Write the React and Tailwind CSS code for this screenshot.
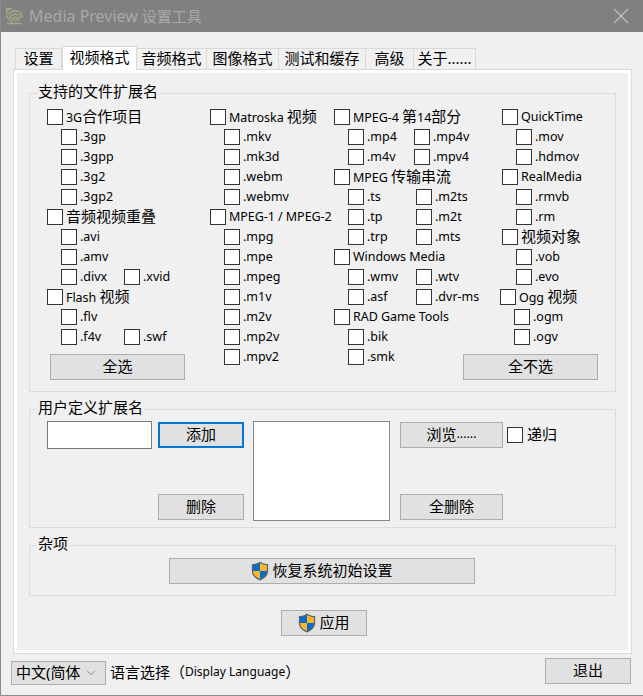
import React from 'react';
import { ChevronDown, X } from 'lucide-react';

const Check = () => <span className="w-4 h-4 shrink-0 bg-white border border-[#333]" />;

// top level item of a column, label sits 3px after the box
const Head = ({ label, latin, className = '' }) => (
  <div className={`h-5 flex items-center gap-[3px] ${className}`}>
    <Check />
    <span className={`whitespace-nowrap ${latin ? 'pt-px' : 'pb-[2px]'}`}>{label}</span>
  </div>
);

const Ext = ({ label, width }) => (
  <div className="h-5 flex items-center gap-[3px] shrink-0" style={width ? { width } : undefined}>
    <Check />
    <span className="whitespace-nowrap text-[12.5px]">{label}</span>
  </div>
);

const Sub = ({ a, b, width, className = 'ml-[14px]' }) => (
  <div className={`flex ${className}`}>
    <Ext label={a} width={b ? width : undefined} />
    {b && <Ext label={b} />}
  </div>
);

const Cjk = ({ children }) => <span className="text-[15px]">{children}</span>;
const Lat = ({ children }) => <span className="text-[12.5px] tracking-[-0.05px]">{children}</span>;

const Btn = ({ children, focused, className = '' }) => (
  <button className={`h-[26px] pb-[2px] flex items-center justify-center bg-[#e1e1e1] text-[15px] text-black ${focused ? 'border-2 border-[#0078d7]' : 'border border-[#adadad]'} ${className}`}>
    {children}
  </button>
);

const Group = ({ title, className = '', children }) => (
  <div className={`relative border border-[#dcdcdc] ${className}`}>
    <span className="absolute left-[7px] top-[-12px] px-[1px] bg-[#f0f0f0] text-[15px] leading-[18px]">{title}</span>
    {children}
  </div>
);

const Shield = () => (
  <svg width="18" height="20" viewBox="0 0 17 20" preserveAspectRatio="none" className="shrink-0 mt-[2px]">
    <path d="M8.5 0.5 C6 2.5 3.5 3 0.8 3 V10 C0.8 14.5 4 17.5 8.5 19.5 C13 17.5 16.2 14.5 16.2 10 V3 C13.5 3 11 2.5 8.5 0.5 Z" fill="#5f6670" />
    <path d="M8.5 2 C6.4 3.5 4.2 4.1 2 4.2 V10 H8.5 Z" fill="#0b6cc5" />
    <path d="M8.5 2 C10.6 3.5 12.8 4.1 15 4.2 V10 H8.5 Z" fill="#fbb82b" />
    <path d="M2 10 C2 13.8 4.8 16.3 8.5 18 V10 Z" fill="#fbb82b" />
    <path d="M15 10 C15 13.8 12.2 16.3 8.5 18 V10 Z" fill="#0b6cc5" />
  </svg>
);

const Logo = () => (
  <svg width="18" height="18" viewBox="0 0 18 18" className="shrink-0" fill="none" stroke="#a5a583" strokeWidth="1.6">
    <path d="M1 1 H8 C4.5 2.5 2.5 4.5 1 8 Z" fill="#a5a583" stroke="none" />
    <path d="M1.5 11 C3 5.5 8 3 12 4 C15 4.8 17 7.5 17 10.5" />
    <path d="M4 14 C4 9.5 8 6.5 11.5 7.2 C14 7.8 15 10 15 12" />
    <path d="M6.5 16 C6 12.5 9 9.8 11.5 10.5 C13 11 13.5 12.5 13.2 14" />
    <path d="M2 16.5 H16" />
    <path d="M9.5 14 C10 13 11 13 11.5 14" />
  </svg>
);

const tabs = [
  ['设置', 'w-[47px]'],
  ['视频格式', 'w-[75px]', true],
  ['音频格式', 'w-[71px]'],
  ['图像格式', 'w-[73px]'],
  ['测试和缓存', 'w-[88px]'],
  ['高级', 'w-[49px]'],
  ['关于......', 'w-[63px]'],
];

export default function App() {
  return (
    <div className="w-[643px] h-[696px] overflow-hidden bg-[#f0f0f0] text-black border-l border-b border-[#8c8c8c] font-['Noto_Sans','Noto_Sans_CJK_SC',sans-serif]">
      {/* title bar */}
      <div className="h-[32px] bg-[#808080] flex items-center pl-[4px] pr-[9px]">
        <Logo />
        <span className="ml-[6px] text-[#a8a8a8] text-[15px] whitespace-nowrap"><span className="text-[16px]">Media Preview</span> 设置工具</span>
        <X size={26} strokeWidth={1} className="ml-auto text-[#c4c4c4]" />
      </div>

      {/* tabs */}
      <div className="h-[37px] flex items-end pl-[14px]">
        {tabs.map(([name, w, active]) => (
          <div
            key={name}
            className={active
              ? `${w} h-[24px] pb-[2px] -mb-px relative bg-white border border-b-0 border-[#d9d9d9] text-[15px] flex items-center justify-center`
              : `${w} h-[21px] pb-[2px] -ml-px first:ml-0 border border-b-0 border-[#d9d9d9] text-[15px] flex items-center justify-center`}
          >
            {name}
          </div>
        ))}
      </div>

      <div className="ml-[12px] w-[619px] h-[585px] border border-[#d9d9d9]">
        <div className="h-full border-[3px] border-white px-[12px] pt-[20px]">
          <Group title="支持的文件扩展名" className="h-[299px] pt-[13px] pl-[17px] flex text-[12.5px]">
            <div className="w-[163px] flex flex-col">
              <Head label={<><Lat>3G</Lat><Cjk>合作项目</Cjk></>} />
              <Sub a=".3gp" />
              <Sub a=".3gpp" />
              <Sub a=".3g2" />
              <Sub a=".3gp2" />
              <Head label={<Cjk>音频视频重叠</Cjk>} />
              <Sub a=".avi" />
              <Sub a=".amv" />
              <Sub a=".divx" b=".xvid" width={63} />
              <Head label={<><Lat>Flash </Lat><Cjk>视频</Cjk></>} />
              <Sub a=".flv" />
              <Sub a=".f4v" b=".swf" width={63} />
              <Btn className="w-[135px] ml-[3px] mt-[7px]">全选</Btn>
            </div>
            <div className="w-[124px] flex flex-col">
              <Head label={<><Lat>Matroska </Lat><Cjk>视频</Cjk></>} />
              <Sub a=".mkv" />
              <Sub a=".mk3d" />
              <Sub a=".webm" />
              <Sub a=".webmv" />
              <Head latin label={<Lat>MPEG-1 / MPEG-2</Lat>} />
              <Sub a=".mpg" />
              <Sub a=".mpe" />
              <Sub a=".mpeg" />
              <Sub a=".m1v" />
              <Sub a=".m2v" />
              <Sub a=".mp2v" />
              <Sub a=".mpv2" />
            </div>
            <div className="w-[168px] flex flex-col">
              <Head label={<><Lat>MPEG-4 </Lat><Cjk>第</Cjk><Lat>14</Lat><Cjk>部分</Cjk></>} />
              <Sub a=".mp4" b=".mp4v" width={66} />
              <Sub a=".m4v" b=".mpv4" width={66} />
              <Head label={<><Lat>MPEG </Lat><Cjk>传输串流</Cjk></>} />
              <Sub a=".ts" b=".m2ts" width={68} />
              <Sub a=".tp" b=".m2t" width={68} />
              <Sub a=".trp" b=".mts" width={68} />
              <Head latin label={<Lat>Windows Media</Lat>} />
              <Sub a=".wmv" b=".wtv" width={68} />
              <Sub a=".asf" b=".dvr-ms" width={68} />
              <Head latin label={<Lat>RAD Game Tools</Lat>} />
              <Sub a=".bik" />
              <Sub a=".smk" />
            </div>
            <div className="flex flex-col">
              <Head latin label={<Lat>QuickTime</Lat>} />
              <Sub a=".mov" />
              <Sub a=".hdmov" />
              <Head latin label={<Lat>RealMedia</Lat>} />
              <Sub a=".rmvb" />
              <Sub a=".rm" />
              <Head label={<Cjk>视频对象</Cjk>} />
              <Sub a=".vob" />
              <Sub a=".evo" />
              <Head className="-ml-[2px]" label={<><Lat>Ogg </Lat><Cjk>视频</Cjk></>} />
              <Sub a=".ogm" className="ml-[12px]" />
              <Sub a=".ogv" className="ml-[12px]" />
              <Btn className="w-[135px] -ml-[39px] mt-[7px]">全不选</Btn>
            </div>
          </Group>

          <Group title="用户定义扩展名" className="h-[119px] mt-[17px] pt-[11px] pl-[17px] flex">
            <div className="w-[105px] h-[28px] bg-white border border-[#7a7a7a]" />
            <div className="w-[86px] h-[98px] ml-[6px] mt-[1px] flex flex-col justify-between">
              <Btn focused className="w-full">添加</Btn>
              <Btn className="w-full">删除</Btn>
            </div>
            <div className="w-[137px] h-[100px] ml-[9px] bg-white border border-[#85858f]" />
            <div className="w-[103px] h-[98px] ml-[10px] mt-[1px] flex flex-col justify-between">
              <Btn className="w-full">浏览<span className="text-[12.5px]">......</span></Btn>
              <Btn className="w-full">全删除</Btn>
            </div>
            <div className="h-[28px] ml-[4px] flex items-center gap-[4px] text-[15px]">
              <Check />
              <span className="pb-[2px]">递归</span>
            </div>
          </Group>

          <Group title="杂项" className="h-[51px] mt-[17px] pt-[12px] pl-[139px]">
            <Btn className="w-[306px] gap-[3px]"><Shield />恢复系统初始设置</Btn>
          </Group>

          <div className="mt-[14px] pl-[252px]">
            <Btn className="w-[86px] gap-[3px]"><Shield />应用</Btn>
          </div>
        </div>
      </div>

      {/* footer */}
      <div className="flex items-start pl-[10px]">
        <div className="w-[95px] h-[24px] pb-[2px] mt-[7px] bg-[#e1e1e1] border border-[#adadad] flex items-center pl-[4px] text-[15px]">
          <span className="whitespace-nowrap">中文(简体</span>
          <ChevronDown size={14} strokeWidth={1} className="ml-auto mr-[7px] mt-[2px] text-[#555]" />
        </div>
        <div className="ml-[4px] mt-[7px] h-[24px] pb-[2px] flex items-center whitespace-nowrap">
          <Cjk>语言选择（</Cjk><span className="text-[12px]">Display Language</span><Cjk>）</Cjk>
        </div>
        <Btn className="w-[86px] mt-[4px] ml-auto mr-[12px]">退出</Btn>
      </div>
    </div>
  );
}
